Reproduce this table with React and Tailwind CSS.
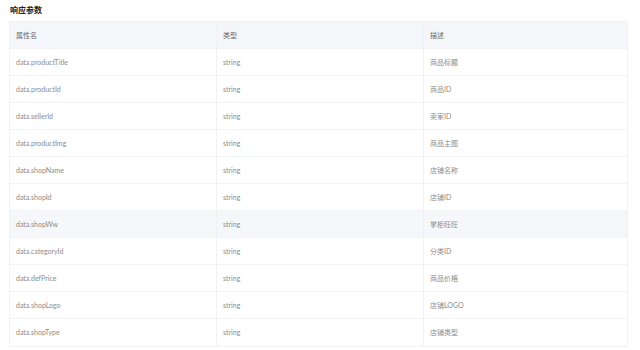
import React from "react";

const rows = [
  ["data.productTitle", "string", "商品标题"],
  ["data.productId", "string", "商品ID"],
  ["data.sellerId", "string", "卖家ID"],
  ["data.productImg", "string", "商品主图"],
  ["data.shopName", "string", "店铺名称"],
  ["data.shopId", "string", "店铺ID"],
  ["data.shopWw", "string", "掌柜旺旺"],
  ["data.categoryId", "string", "分类ID"],
  ["data.defPrice", "string", "商品价格"],
  ["data.shopLogo", "string", "店铺LOGO"],
  ["data.shopType", "string", "店铺类型"],
];

const font = { fontFamily: 'Lato, "Noto Sans CJK SC", sans-serif' };

export default function App() {
  return (
    <div className="w-[640px] h-[350px] bg-white overflow-hidden" style={font}>
      <div className="pl-[10px] pt-[5px] h-[21px] text-[8px] font-bold text-[#222] leading-[11px]">
        响应参数
      </div>
      <div className="ml-[9px] w-[619px] border border-[#f1f2f4]">
        <div className="grid grid-cols-[207px_207px_1fr] h-[27px] bg-[#f5f6f9] text-[7px] text-[#6a6a6a] border-b border-[#f1f2f4]">
          <div className="pl-[6px] flex items-center border-r border-[#f1f2f4]">属性名</div>
          <div className="pl-[6px] flex items-center border-r border-[#f1f2f4]">类型</div>
          <div className="pl-[6px] flex items-center">描述</div>
        </div>
        {rows.map((r, i) => (
          <div
            key={i}
            className={
              "grid grid-cols-[207px_207px_1fr] h-[27px] text-[7px] text-[#8c8c8c] " +
              (i < rows.length - 1 ? "border-b border-[#f1f2f4] " : "") +
              (i === 6 ? "bg-[#f6f7fa]" : "bg-white")
            }
          >
            <div className="pl-[6px] flex items-center border-r border-[#f1f2f4]">{r[0]}</div>
            <div className="pl-[6px] flex items-center border-r border-[#f1f2f4]">{r[1]}</div>
            <div className="pl-[6px] flex items-center">{r[2]}</div>
          </div>
        ))}
      </div>
    </div>
  );
}
